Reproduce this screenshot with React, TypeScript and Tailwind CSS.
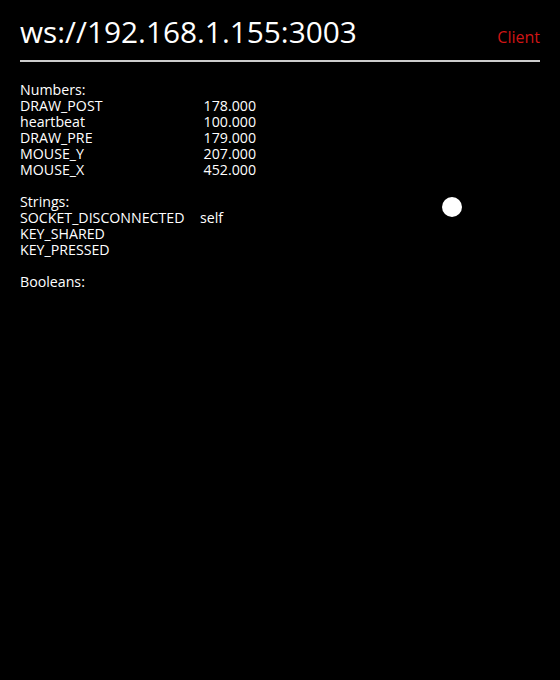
import React from 'react';

interface IRow {
  name: string;
  value?: string;
}

const numbers: IRow[] = [
  { name: 'DRAW_POST', value: '178.000' },
  { name: 'heartbeat', value: '100.000' },
  { name: 'DRAW_PRE', value: '179.000' },
  { name: 'MOUSE_Y', value: '207.000' },
  { name: 'MOUSE_X', value: '452.000' },
];

const strings: IRow[] = [
  { name: 'SOCKET_DISCONNECTED', value: 'self' },
  { name: 'KEY_SHARED' },
  { name: 'KEY_PRESSED' },
];

/**
 * Section - one titled block of key/value rows.
 */
const Section = (props: { title: string; rows: IRow[]; numeric?: boolean }) => {
  return (
    <div className="mb-4">
      <div>{props.title}</div>
      {props.rows.map((row) => (
        <div key={row.name} className="flex">
          <span className={props.numeric ? 'w-[172px] whitespace-nowrap' : 'w-[180px] whitespace-nowrap'}>
            {row.name}
          </span>
          <span className={props.numeric ? 'w-[64px] text-right whitespace-nowrap' : 'whitespace-nowrap'}>
            {row.value}
          </span>
        </div>
      ))}
    </div>
  );
};

export default function App() {
  return (
    <div
      className="relative w-[560px] h-[680px] bg-black text-white px-5 overflow-hidden"
      style={{ fontFamily: '"Open Sans", sans-serif' }}
    >
      <header className="flex items-baseline justify-between pt-[14px] pb-[10px] border-b-2 border-[#cccccc]">
        <span className="text-[29.8px] leading-[36px]">ws://192.168.1.155:3003</span>
        <span className="text-[16px] text-[#d01515]">Client</span>
      </header>
      <div className="mt-[20px] text-[14.2px] leading-[16px]">
        <Section title="Numbers:" rows={numbers} numeric />
        <Section title="Strings:" rows={strings} />
        <Section title="Booleans:" rows={[]} />
      </div>
      {/* mouse cursor dot */}
      <div className="absolute left-[442px] top-[197px] w-5 h-5 rounded-full bg-white" />
    </div>
  );
}
